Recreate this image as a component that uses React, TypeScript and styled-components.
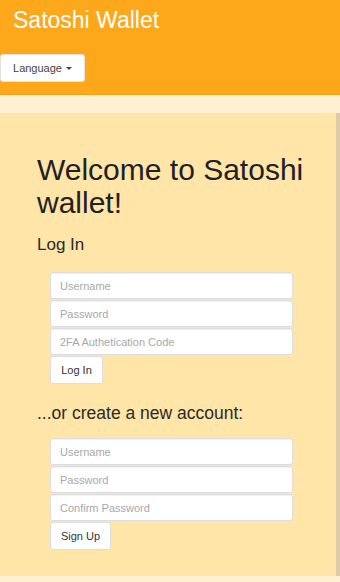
import React from "react";
import styled, { createGlobalStyle } from "styled-components";

const Global = createGlobalStyle`
  html, body { margin: 0; padding: 0; }
  body {
    background: #fff0d3;
    font-family: "Liberation Sans", Arial, sans-serif;
    width: 340px;
    height: 582px;
    overflow: hidden;
  }
`;

const Page = styled.div`
  display: flex;
  flex-direction: column;
  width: 340px;
  height: 582px;
`;

const Header = styled.header`
  background: #fca81a;
  height: 95px;
  box-sizing: border-box;
  padding-top: 7px;
  display: flex;
  flex-direction: column;
  border-bottom: 1px solid #f6a018;
`;

const Brand = styled.div`
  color: #fff;
  font-size: 23px;
  line-height: 26px;
  padding-left: 13px;
`;

const LangButton = styled.button`
  margin-top: 21px;
  align-self: flex-start;
  width: 85px;
  height: 28px;
  background: #fff;
  border: 1px solid #e8e3da;
  border-radius: 3px;
  font-family: inherit;
  font-size: 11px;
  color: #444;
  display: flex;
  align-items: center;
  justify-content: center;
  gap: 4px;
  padding: 0;
`;

const Caret = styled.span`
  width: 0;
  height: 0;
  border-left: 3px solid transparent;
  border-right: 3px solid transparent;
  border-top: 3px solid #444;
`;

const Panel = styled.main`
  margin-top: 18px;
  width: 340px;
  height: 463px;
  box-sizing: border-box;
  background: #ffe5a8;
  border-right: 4px solid #dccba6;
  padding: 40px 0 0 37px;
  display: flex;
  flex-direction: column;
`;

const Title = styled.h1`
  margin: 0;
  font-weight: normal;
  font-size: 30px;
  line-height: 33px;
  color: #1f2125;
`;

const Label = styled.h2<{ $top: number; $size: number }>`
  margin: ${(p) => p.$top}px 0 0 0;
  font-weight: normal;
  font-size: ${(p) => p.$size}px;
  line-height: 20px;
  color: #2a2a2a;
`;

const Form = styled.form<{ $top: number }>`
  margin: ${(p) => p.$top}px 0 0 13px;
  width: 243px;
  display: flex;
  flex-direction: column;
  gap: 1px;
`;

const Input = styled.input`
  box-sizing: border-box;
  width: 243px;
  height: 27px;
  border: 1px solid #ddd;
  border-radius: 3px;
  background: #fff;
  padding: 0 9px;
  font-family: inherit;
  font-size: 11px;
  color: #333;
  box-shadow: inset 0 1px 1px rgba(0, 0, 0, 0.06);
  &::placeholder { color: #a8a8a8; }
`;

const Submit = styled.button<{ $w: number }>`
  align-self: flex-start;
  width: ${(p) => p.$w}px;
  height: 28px;
  background: #fff;
  border: 1px solid #ddd;
  border-radius: 3px;
  font-family: inherit;
  font-size: 11px;
  color: #333;
  padding: 0;
`;

export default function App() {
  return (
    <>
      <Global />
      <Page>
        <Header>
          <Brand>Satoshi Wallet</Brand>
          <LangButton>
            Language <Caret />
          </LangButton>
        </Header>
        <Panel>
          <Title>
            Welcome to Satoshi
            <br />
            wallet!
          </Title>
          <Label $top={16} $size={17}>Log In</Label>
          <Form $top={17} onSubmit={(e) => e.preventDefault()}>
            <Input placeholder="Username" />
            <Input placeholder="Password" type="password" />
            <Input placeholder="2FA Authetication Code" />
            <Submit $w={53}>Log In</Submit>
          </Form>
          <Label $top={19} $size={17.5}>...or create a new account:</Label>
          <Form $top={15} onSubmit={(e) => e.preventDefault()}>
            <Input placeholder="Username" />
            <Input placeholder="Password" type="password" />
            <Input placeholder="Confirm Password" type="password" />
            <Submit $w={61}>Sign Up</Submit>
          </Form>
        </Panel>
      </Page>
    </>
  );
}
